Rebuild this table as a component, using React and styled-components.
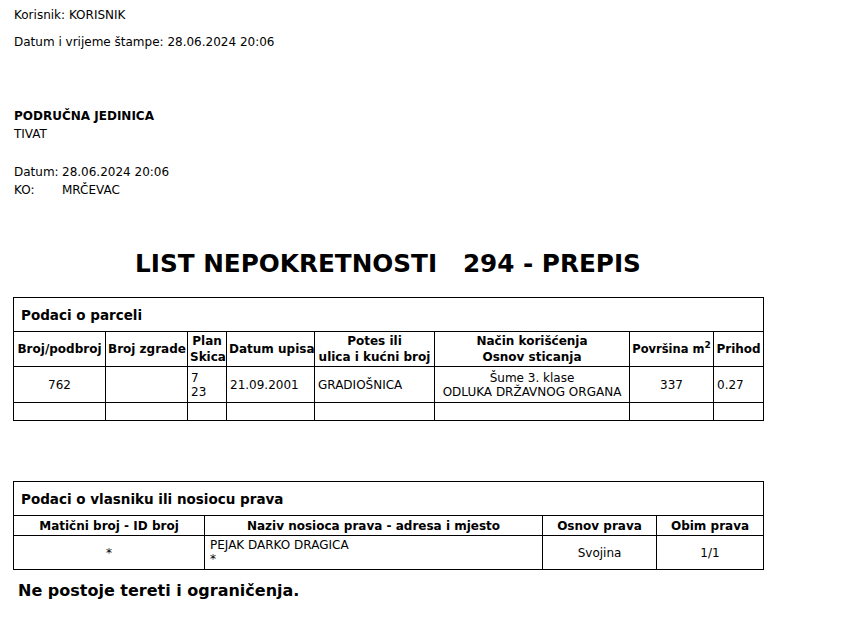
import React from 'react';
import styled, { createGlobalStyle } from 'styled-components';

const GlobalStyle = createGlobalStyle`
  body {
    margin: 0;
    background: #fff;
    color: #000;
    font-family: "DejaVu Sans", Verdana, sans-serif;
    font-size: 12px;
  }
`;

const Page = styled.div`
  width: 860px;
  padding: 8px 0 0 14px;
  box-sizing: border-box;
`;

const MetaLine = styled.div`
  line-height: 14px;
  margin-bottom: ${(p) => p.gap || 0}px;
`;

const Unit = styled.div`
  margin-top: 58px;
  line-height: 18px;
`;

const Bold = styled.div`
  font-weight: bold;
`;

const InfoTable = styled.table`
  border-collapse: collapse;
  margin-top: 20px;
  td {
    padding: 0;
    line-height: 18px;
    vertical-align: top;
  }
  td:first-child {
    width: 48px;
  }
`;

const Title = styled.h1`
  width: 750px;
  margin: 50px 0 0 -1px;
  text-align: center;
  font-size: 24.7px;
  line-height: 30px;
  font-weight: bold;
  white-space: pre;
`;

const Grid = styled.table`
  border-collapse: collapse;
  width: 751px;
  margin: ${(p) => p.top}px 0 0 -1px;
  table-layout: fixed;
  td,
  th {
    border: 1px solid #000;
    padding: 0 3px;
    font-size: 12px;
  }
  td {
    line-height: 14px;
  }
`;

const Th = styled.th`
  && {
    font-weight: bold;
    text-align: center;
    line-height: 16px;
    white-space: nowrap;
    padding: 0 ${(p) => (p.tight ? 0 : 2)}px;
    font-size: ${(p) => (p.tight ? 11.5 : 12)}px;
  }
`;

const Col = styled.col`
  width: ${(p) => p.w}px;
`;

const Row = styled.tr`
  height: ${(p) => p.h}px;
`;

const Sup = styled.sup`
  font-size: 9px;
  line-height: 0;
`;

const Caption = styled.th`
  && {
    text-align: left;
    font-size: 13.5px;
    font-weight: bold;
    height: 33px;
    padding-left: 7px;
  }
`;

const Cell = styled.td`
  text-align: ${(p) => p.align || 'left'};
  vertical-align: ${(p) => (p.top ? 'top' : 'middle')};
  && {
    padding-top: ${(p) => (p.top ? 2 : 0)}px;
    padding-left: ${(p) => (p.top ? 5 : 3)}px;
  }
`;

const Footer = styled.div`
  font-weight: bold;
  font-size: 16px;
  margin: 11px 0 0 4px;
`;

const parcelCols = [92, 82, 39, 88, 120, 195, 84, 50];
const ownerCols = [191, 338, 114, 107];

export default function App() {
  return (
    <Page>
      <GlobalStyle />
      <MetaLine gap={13}>Korisnik: KORISNIK</MetaLine>
      <MetaLine>Datum i vrijeme štampe: 28.06.2024 20:06</MetaLine>

      <Unit>
        <Bold>PODRUČNA JEDINICA</Bold>
        <div>TIVAT</div>
      </Unit>

      <InfoTable>
        <tbody>
          <tr>
            <td>Datum:</td>
            <td>28.06.2024 20:06</td>
          </tr>
          <tr>
            <td>KO:</td>
            <td>MRČEVAC</td>
          </tr>
        </tbody>
      </InfoTable>

      <Title>{'LIST NEPOKRETNOSTI   294 - PREPIS'}</Title>

      <Grid top={18}>
        <colgroup>
          {parcelCols.map((w, i) => (
            <Col key={i} w={w} />
          ))}
        </colgroup>
        <tbody>
          <tr>
            <Caption colSpan={8}>Podaci o parceli</Caption>
          </tr>
          <Row h={35}>
            <Th>Broj/podbroj</Th>
            <Th>Broj zgrade</Th>
            <Th>
              Plan
              <br />
              Skica
            </Th>
            <Th>Datum upisa</Th>
            <Th>
              Potes ili
              <br />
              ulica i kućni broj
            </Th>
            <Th>
              Način korišćenja
              <br />
              Osnov sticanja
            </Th>
            <Th tight>
              Površina m<Sup>2</Sup>
            </Th>
            <Th>Prihod</Th>
          </Row>
          <Row h={36}>
            <Cell align="center">762</Cell>
            <Cell />
            <Cell>
              7
              <br />
              23
            </Cell>
            <Cell>21.09.2001</Cell>
            <Cell>GRADIOŠNICA</Cell>
            <Cell align="center">
              Šume 3. klase
              <br />
              ODLUKA DRŽAVNOG ORGANA
            </Cell>
            <Cell align="center">337</Cell>
            <Cell>0.27</Cell>
          </Row>
          <Row h={18}>
            {parcelCols.map((w, i) => (
              <Cell key={i} />
            ))}
          </Row>
        </tbody>
      </Grid>

      <Grid top={60}>
        <colgroup>
          {ownerCols.map((w, i) => (
            <Col key={i} w={w} />
          ))}
        </colgroup>
        <tbody>
          <tr>
            <Caption colSpan={4}>Podaci o vlasniku ili nosiocu prava</Caption>
          </tr>
          <Row h={20}>
            <Th>Matični broj - ID broj</Th>
            <Th>Naziv nosioca prava - adresa i mjesto</Th>
            <Th>Osnov prava</Th>
            <Th>Obim prava</Th>
          </Row>
          <Row h={34}>
            <Cell align="center">*</Cell>
            <Cell top>
              PEJAK DARKO DRAGICA
              <br />*
            </Cell>
            <Cell align="center">Svojina</Cell>
            <Cell align="center">1/1</Cell>
          </Row>
        </tbody>
      </Grid>

      <Footer>Ne postoje tereti i ograničenja.</Footer>
    </Page>
  );
}
